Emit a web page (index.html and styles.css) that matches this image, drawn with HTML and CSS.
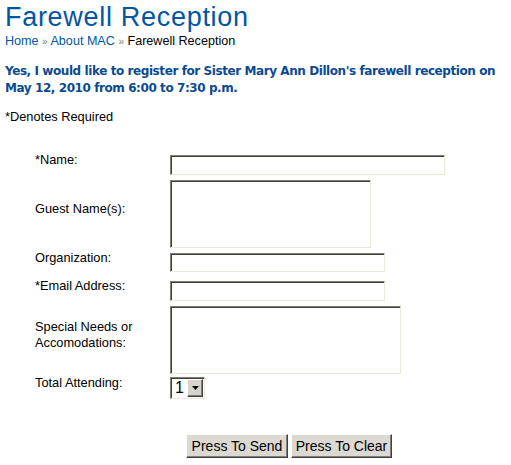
FILE: index.html
```html
<!DOCTYPE html>
<html>
<head>
<meta charset="utf-8">
<title>Farewell Reception</title>
<link rel="stylesheet" href="styles.css">
</head>
<body>
<h1 class="title">Farewell Reception</h1>
<div class="crumbs"><a href="#">Home</a> <span class="sep">»</span> <a href="#">About MAC</a> <span class="sep">»</span> Farewell Reception</div>
<p class="intro">Yes, I would like to register for Sister Mary Ann Dillon's farewell reception on May 12, 2010 from 6:00 to 7:30 p.m.</p>
<p class="note">*Denotes Required</p>
<form class="form">
  <div class="row">
    <label class="lbl">*Name:</label>
    <input class="field w-name" type="text">
  </div>
  <div class="row">
    <label class="lbl">Guest Name(s):</label>
    <textarea class="field area w-guest"></textarea>
  </div>
  <div class="row row-org">
    <label class="lbl">Organization:</label>
    <input class="field w-org" type="text">
  </div>
  <div class="row">
    <label class="lbl">*Email Address:</label>
    <input class="field w-org h-email" type="text">
  </div>
  <div class="row row-special">
    <label class="lbl">Special Needs or<br>Accomodations:</label>
    <textarea class="field area w-special"></textarea>
  </div>
  <div class="row">
    <label class="lbl">Total Attending:</label>
    <div class="select">
      <span class="select-val">1</span>
      <span class="select-btn"><svg width="7" height="4" viewBox="0 0 7 4"><path d="M0 0H7L3.5 4Z" fill="#000"/></svg></span>
    </div>
  </div>
  <div class="actions">
    <button type="button" class="btn btn-send">Press To Send</button>
    <button type="button" class="btn btn-clear">Press To Clear</button>
  </div>
</form>
</body>
</html>
```
FILE: styles.css
```css
html, body {
  margin: 0;
  padding: 0;
  background: #fff;
}
body {
  padding: 2px 5px 0 5px;
  font-family: Arial, "Liberation Sans", sans-serif;
  font-size: 12px;
  color: #000;
}
.title {
  margin: 0;
  font-size: 27px;
  line-height: 31px;
  letter-spacing: 0.7px;
  font-weight: normal;
  color: #0056a4;
}
.crumbs {
  margin-top: 1px;
  font-size: 12.6px;
  line-height: 15px;
}
.crumbs a {
  color: #0056a4;
  text-decoration: none;
}
.crumbs .sep {
  color: #777;
  font-size: 10px;
}
.intro {
  margin: 14px 0 0 0;
  width: 508px;
  font-family: Verdana, "DejaVu Sans", sans-serif;
  font-weight: bold;
  font-size: 12px;
  line-height: 17px;
  letter-spacing: -0.42px;
  color: #0a4a92;
}
.note {
  margin: 12px 0 0 0;
  font-size: 12.8px;
  line-height: 15px;
}
.form {
  margin-top: 31px;
  padding-left: 30px;
}
.row {
  display: flex;
  align-items: center;
  margin-bottom: 5px;
}
.row-org {
  margin-bottom: 9px;
}
.row-special {
  margin-bottom: 3px;
}
.lbl {
  width: 135px;
  flex: none;
  margin-top: -5px;
  padding-bottom: 5px;
  font-size: 12.8px;
  line-height: 16px;
}
.field {
  box-sizing: border-box;
  margin: 0;
  padding: 0 2px;
  border: 1px solid;
  border-color: #7f7b70 #ece9d8 #ece9d8 #7f7b70;
  box-shadow: inset 1px 1px 0 #404040, inset -1px -1px 0 #fff;
  background: #fff;
  font: 12px Arial, "Liberation Sans", sans-serif;
  height: 20px;
}
.w-name { width: 275px; }
.w-org { width: 215px; height: 19px; }
.h-email { height: 20px; }
.area {
  resize: none;
  overflow: hidden;
  height: 68px;
}
.w-guest { width: 201px; }
.w-special { width: 231px; }
.select {
  box-sizing: border-box;
  width: 35px;
  height: 22px;
  display: flex;
  align-items: stretch;
  border: 1px solid;
  border-color: #7f7b70 #ece9d8 #ece9d8 #7f7b70;
  box-shadow: inset 1px 1px 0 #404040;
  padding: 1px;
  background: #fff;
}
.select-val {
  flex: 1;
  padding-left: 3px;
  font-size: 16px;
  line-height: 18px;
}
.select-btn {
  box-sizing: border-box;
  width: 16px;
  display: flex;
  align-items: center;
  justify-content: center;
  background: #d8d4cc;
  border: 1px solid;
  border-color: #fff #404040 #404040 #fff;
  box-shadow: inset -1px -1px 0 #808080;
}
.actions {
  display: flex;
  gap: 3px;
  margin-top: 35px;
  padding-left: 151px;
}
.btn {
  box-sizing: border-box;
  height: 24px;
  margin: 0;
  padding: 0;
  background: #dcd9d2;
  border: 1px solid;
  border-color: #fff #404040 #404040 #fff;
  box-shadow: inset -1px -1px 0 #808080;
  font: 14px Arial, "Liberation Sans", sans-serif;
  color: #000;
}
.btn-send { width: 102px; }
.btn-clear { width: 101px; }
```
